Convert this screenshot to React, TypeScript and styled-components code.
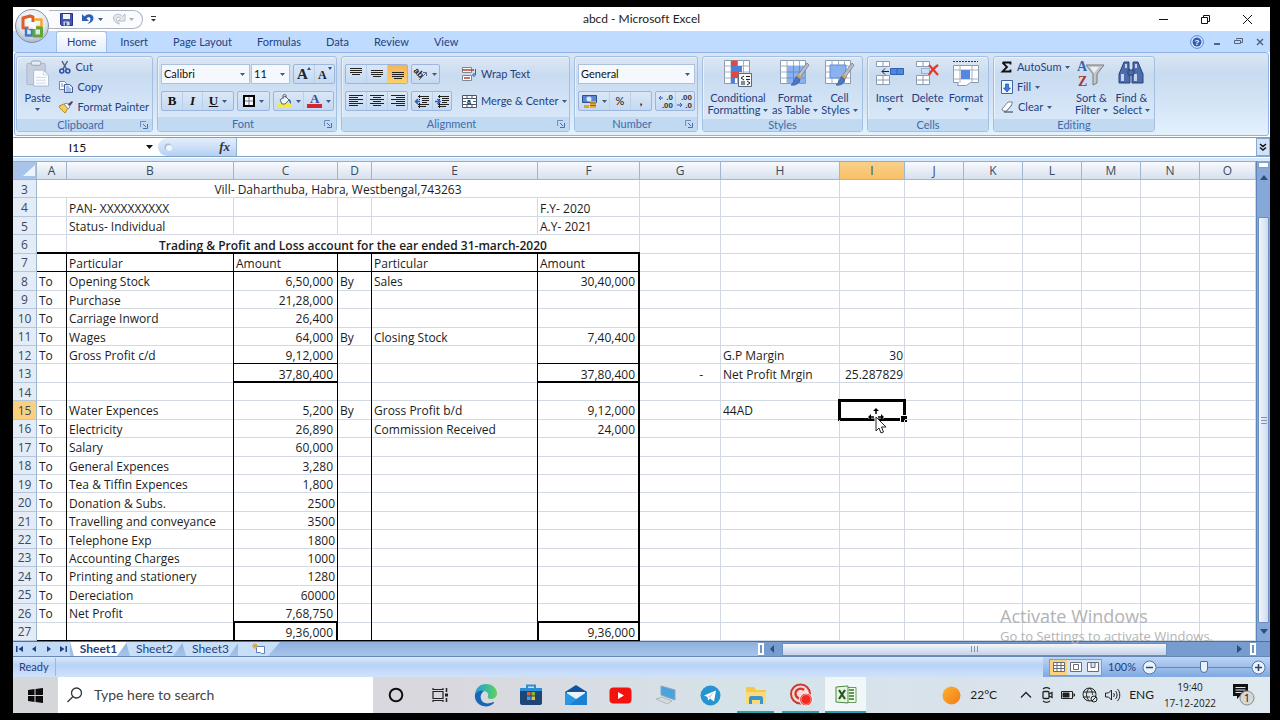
import React from "react";
import styled, { createGlobalStyle, css } from "styled-components";

const UI = `"Open Sans", "Noto Sans", sans-serif`;
const INK = "#1f4182";

const GlobalStyle = createGlobalStyle`
  * { box-sizing: border-box; }
  body { margin: 0; background: #000; }
  button, input, select { font: inherit; color: inherit; margin: 0; padding: 0; border: 0; background: none; border-radius: 0; outline: 0; }
  svg { display: block; flex: none; overflow: visible; }
`;

const Screen = styled.div`
  height: 100vh;
  padding: 7px 10px 7px 13px;
  background: #000;
  font: 11px/12px Lato, ${UI};
  color: ${INK};
  font-variant-ligatures: none;
`;

const Desktop = styled.div`
  height: 100%;
  display: flex;
  flex-direction: column;
  position: relative;
  overflow: hidden;
  background: #fff;
`;

/* ---------- title bar ---------- */

const TitleBar = styled.header`
  height: 24px;
  flex: none;
  display: grid;
  grid-template-columns: 1fr auto 1fr;
  align-items: center;
  color: #222;
  font-size: 12px;
`;

const QuickBar = styled.div`
  display: flex;
  align-items: center;
  padding-left: 36px;
`;

const QuickPill = styled.div`
  height: 19px;
  width: 94px;
  display: flex;
  align-items: center;
  gap: 5px;
  padding-left: 11px;
  border: 1px solid #aab4c4;
  border-left: 0;
  border-radius: 0 10px 10px 0;
  background: #fafbfd;
`;

const IconButton = styled.button<{ $w?: number }>`
  display: flex;
  align-items: center;
  justify-content: center;
  gap: 4px;
  width: ${(p) => (p.$w ? `${p.$w}px` : "auto")};
`;

const WindowButtons = styled.div`
  display: flex;
  justify-content: flex-end;
  padding-right: 2px;
`;

const OfficeButton = styled.button`
  position: absolute;
  z-index: 2;
  left: 1px;
  top: 1px;
`;

/* ---------- ribbon ---------- */

const TabBar = styled.nav`
  height: 21px;
  flex: none;
  display: flex;
  align-items: stretch;
  gap: 1px;
  padding-left: 43px;
  background: #bfdbff;
`;

const Tab = styled.button<{ $on?: boolean }>`
  padding: 0 12px;
  font-size: 11px;
  ${(p) =>
    p.$on &&
    css`
      padding: 0 10px;
      background: linear-gradient(#fff, #e3edf9);
      border: 1px solid #a0bee6;
      border-bottom: 0;
      border-radius: 3px 3px 0 0;
    `}
`;

const TabTools = styled.div`
  margin-left: auto;
  display: flex;
  align-items: center;
  gap: 9px;
  padding-right: 4px;
`;

const Ribbon = styled.section`
  height: 84px;
  flex: none;
  display: flex;
  gap: 4px;
  margin: 0 1px;
  padding: 3px 1px;
  border: 1px solid #8db2e3;
  border-radius: 3px;
  background: linear-gradient(#dbe6f4, #c9dbf0 25%, #d3e4f6 60%, #e4f2fd);
`;

const GroupBox = styled.section<{ $w: number }>`
  width: ${(p) => p.$w}px;
  flex: none;
  display: flex;
  flex-direction: column;
  border: 1px solid #a3c0e2;
  border-radius: 3px;
  box-shadow: inset 1px 1px #e9f1fa;
  background: linear-gradient(#dde7f4, #c9dbf0 25%, #d2e3f6 60%, #dcebfb);
`;

const GroupBody = styled.div`
  flex: 1;
  display: flex;
  padding: 0 3px;
`;

const GroupLabel = styled.div`
  height: 14px;
  display: flex;
  align-items: center;
  padding: 0 4px;
  background: #c1d9f1;
  color: #3e6aaa;
  > span { flex: 1; text-align: center; }
`;

const BigButton = styled.button<{ $w: number }>`
  width: ${(p) => p.$w}px;
  height: 62px;
  display: flex;
  flex-direction: column;
  align-items: center;
  padding-top: 3px;
  white-space: nowrap;
  > svg { margin-top: 4px; }
`;

const IconSlot = styled.span`
  height: 27px;
  margin-bottom: 5px;
`;

const BigLine = styled.span`
  display: flex;
  align-items: center;
  gap: 3px;
`;

const SmallStack = styled.div`
  display: flex;
  flex-direction: column;
  padding-left: 4px;
`;

const SmallButton = styled.button`
  height: 20px;
  display: flex;
  align-items: center;
  gap: 4px;
  white-space: nowrap;
`;

const Rows = styled.div`
  display: flex;
  flex-direction: column;
  gap: 7px;
  padding-top: 7px;
`;

const Row = styled.div<{ $gap?: number }>`
  display: flex;
  gap: ${(p) => p.$gap ?? 3}px;
  height: 20px;
`;

const Cluster = styled.div`
  display: flex;
  border: 1px solid #9ab6dc;
  border-radius: 2px;
  background: linear-gradient(#dbe7f6, #c5d9f1);
  > button + button { border-left: 1px solid #b9cfea; }
`;

const ToolButton = styled.button<{ $w: number; $on?: boolean }>`
  width: ${(p) => p.$w}px;
  display: flex;
  align-items: center;
  justify-content: center;
  gap: 4px;
  color: #111;
  background: ${(p) => (p.$on ? "linear-gradient(#f6b25c, #fcd06a)" : "none")};
`;

const Combo = styled.label<{ $w: number }>`
  width: ${(p) => p.$w}px;
  display: flex;
  align-items: center;
  padding: 0 4px 0 2px;
  border: 1px solid #abc1de;
  background: #f5f9fe;
  color: #111;
  select { flex: 1; min-width: 0; appearance: none; }
`;

const Divider = styled.div`
  width: 1px;
  margin: 6px 5px 6px 5px;
  background: #9dbbe0;
`;

/* ---------- formula bar ---------- */

const FormulaBar = styled.div`
  height: 20px;
  flex: none;
  display: flex;
  margin-top: 1px;
  border-top: 1px solid #7d9cbc;
  border-bottom: 1px solid #7fa3c4;
  background: #fff;
`;

const NameBox = styled.label`
  width: 145px;
  display: flex;
  align-items: center;
  color: #111;
  input { width: 129px; text-align: center; font-size: 12px; }
  svg { margin-left: 4px; }
`;

const FxButton = styled.button`
  width: 79px;
  display: flex;
  align-items: center;
  justify-content: space-between;
  padding: 0 6px;
  border-right: 1px solid #8fb0d8;
  border-radius: 9px 0 0 9px;
  background: linear-gradient(#e4effc, #b5d0f2);
  color: #333;
  font: italic bold 13px/14px "Liberation Serif", serif;
`;

const FormulaInput = styled.input`
  flex: 1;
  min-width: 0;
`;

const ExpandButton = styled.button`
  width: 14px;
  display: flex;
  align-items: center;
  justify-content: center;
  border: 1px solid #86a8d3;
  background: #cfe2f8;
`;

/* ---------- sheet ---------- */

const SheetArea = styled.main`
  flex: 1;
  min-height: 0;
  display: flex;
  margin-top: 4px;
  position: relative;
  box-shadow: 0 -3px #d6e8fa;
`;

const Table = styled.table`
  flex: 1;
  width: 100%;
  height: 100%;
  table-layout: fixed;
  border-collapse: separate;
  border-spacing: 0;
  color: #1c1c1c;
  font: 12px/14px ${UI};
  white-space: nowrap;
`;

const ColHead = styled.th<{ $on?: boolean }>`
  height: 19px;
  padding: 0;
  font-weight: 400;
  color: #3a4a5e;
  border-right: 1px solid #9eb6ce;
  border-bottom: 1px solid #9eb6ce;
  border-top: 1px solid #8fb0cc;
  background: ${(p) => (p.$on ? "linear-gradient(#f9d08c, #f8c065)" : "linear-gradient(#f8fafd, #d6e0ee)")};
`;

const Corner = styled.th`
  padding: 0;
  border-right: 1px solid #9eb6ce;
  border-bottom: 1px solid #9eb6ce;
  border-top: 1px solid #8fb0cc;
  background: #a9c4e9;
  svg { margin-left: 10px; }
`;

const RowHead = styled.th<{ $on?: boolean }>`
  padding: 2px 0 0;
  font-weight: 400;
  color: #3a4a5e;
  border-right: 1px solid #9eb6ce;
  border-bottom: 1px solid #b4c6dc;
  background: ${(p) => (p.$on ? "#fbcf7c" : "#e4ecf7")};
`;

type Line = 0 | 1 | 2;
const RULE = "#000";
const FAINT = "#d3d9e2";

/* Ruled edges are listed before the faint gridlines so they paint over them. */
const edges = (r: Line = 0, b: Line = 0, l: Line = 0) => {
  const ruled = [r && `inset -${r}px 0 ${RULE}`, b && `inset 0 -${b}px ${RULE}`, l && `inset ${l}px 0 ${RULE}`];
  const faint = [!r && `inset -1px 0 ${FAINT}`, !b && `inset 0 -1px ${FAINT}`];
  return [...ruled, ...faint].filter(Boolean).join(", ");
};

const Cell = styled.td<{ $r?: Line; $b?: Line; $l?: Line; $align?: string; $end?: number; $bold?: boolean }>`
  position: relative;
  height: 18px;
  padding: 2px ${(p) => p.$end ?? 3}px 0 2px;
  text-align: ${(p) => p.$align ?? "left"};
  font-weight: ${(p) => (p.$bold ? 600 : 400)};
  box-shadow: ${(p) => edges(p.$r, p.$b, p.$l)};
`;

const Selection = styled.div`
  position: absolute;
  inset: -2px -1px -1px -2px;
  border: 3px solid #000;
  &::after {
    content: "";
    position: absolute;
    right: -4px;
    bottom: -4px;
    width: 6px;
    height: 6px;
    background: #000;
    border: solid #fff;
    border-width: 1px 0 0 1px;
  }
`;

const Pointer = styled.svg`
  position: absolute;
  z-index: 1;
  left: 28px;
  top: 7px;
`;

const Watermark = styled.div`
  position: absolute;
  right: 52px;
  bottom: -4px;
  width: 218px;
  color: #b3b3b3;
  font-family: ${UI};
  white-space: nowrap;
`;
const MarkTitle = styled.div`
  font-size: 18px;
  line-height: 22px;
`;
const MarkText = styled.div`
  font-size: 13px;
  line-height: 18px;
`;

const VScroll = styled.div`
  width: 14px;
  flex: none;
  display: flex;
  flex-direction: column;
  align-items: center;
  border-left: 1px solid #5f86bb;
  background: #86a8d8;
`;
const SplitHandle = styled.div`
  width: 11px;
  height: 6px;
  margin: 1px 0 7px;
  border: 1px solid #7f9fc9;
  background: #fff;
`;
const VThumb = styled.div`
  flex: 1;
  width: 11px;
  margin: 37px 0 6px;
  border: 1px solid #6c8fc0;
  border-radius: 1px;
  background: linear-gradient(90deg, #f2f6fc, #cddcf0);
  display: flex;
  align-items: center;
  justify-content: center;
`;

/* ---------- sheet tabs, status ---------- */

const BottomBar = styled.div`
  height: 16px;
  flex: none;
  display: flex;
  border-top: 1px solid #4f6f9f;
  border-bottom: 1px solid #6787b7;
  background: linear-gradient(#8fb1dd, #a6c4ea);
`;
const SheetNav = styled.div`
  width: 57px;
  display: flex;
  align-items: center;
  justify-content: space-around;
  background: #c4dbf7;
`;
const SheetTab = styled.button<{ $on?: boolean }>`
  width: 57px;
  font-size: 12px;
  font-weight: ${(p) => (p.$on ? 700 : 400)};
  background: ${(p) => (p.$on ? "#fff" : "#c9def7")};
  clip-path: polygon(0 0, 100% 0, calc(100% - 10px) 100%, 4px 100%);
  margin-right: -1px;
`;
const NewTab = styled.button`
  width: 42px;
  display: flex;
  align-items: center;
  justify-content: center;
  background: #c9def7;
  clip-path: polygon(0 0, 100% 0, calc(100% - 12px) 100%, 0 100%);
`;
const HScroll = styled.div`
  width: 512px;
  margin-left: auto;
  display: flex;
  align-items: center;
  background: #779dd0;
`;
const Grip = styled.div`
  width: 6px;
  height: 12px;
  border: 2px solid #fff;
  background: #6e93c4;
`;
const HThumb = styled.div`
  flex: 1;
  height: 13px;
  margin: 0 69px 0 6px;
  display: flex;
  align-items: center;
  justify-content: center;
  border: 1px solid #6c8fc0;
  background: linear-gradient(#f4f7fc, #c4d2e8);
`;
const StatusBar = styled.footer`
  height: 20px;
  flex: none;
  display: flex;
  align-items: center;
  background: linear-gradient(#dbe9fb, #b9d3f6 40%, #cfe2fb);
`;
const Ready = styled.div`
  width: 43px;
  padding-left: 6px;
  line-height: 18px;
  border-right: 1px solid #98b8e3;
`;
const StatusTools = styled.div`
  margin-left: auto;
  width: 227px;
  height: 20px;
  display: flex;
  align-items: center;
  padding: 0 4px 0 6px;
  background: linear-gradient(#bcd5f6, #7fa9e0);
`;
const ViewButtons = styled.div`
  display: flex;
  border: 1px solid #7b9ccc;
  background: #d5e4f6;
`;
const ViewButton = styled.button<{ $on?: boolean }>`
  width: 17px;
  height: 15px;
  display: flex;
  align-items: center;
  justify-content: center;
  background: ${(p) => (p.$on ? "#fbd27d" : "none")};
`;
const ZoomText = styled.span`
  width: 40px;
  text-align: center;
`;
const ZoomRange = styled.input`
  flex: 1;
  min-width: 0;
  height: 14px;
  appearance: none;
  background: linear-gradient(#5f86bd, #5f86bd) center / 100% 1px no-repeat;
  &::-webkit-slider-thumb {
    appearance: none;
    width: 8px;
    height: 12px;
    border: 1px solid #4c6f9f;
    border-radius: 1px 1px 4px 4px;
    background: #e8f1fc;
  }
`;

/* ---------- taskbar ---------- */

const Taskbar = styled.footer`
  height: 36px;
  flex: none;
  display: flex;
  align-items: stretch;
  background: linear-gradient(90deg, #d5d6da, #d9d8de 35%, #d5e4ea 60%, #d9e2ea 75%, #dfe9f0);
  color: #1d1d1d;
`;
const StartButton = styled.button`
  width: 45px;
  display: flex;
  align-items: center;
  justify-content: center;
`;
const Search = styled.label`
  width: 315px;
  display: flex;
  align-items: center;
  gap: 11px;
  padding-left: 9px;
  background: #fff;
  input { flex: 1; min-width: 0; font-size: 14px; line-height: 18px; }
  input::placeholder { color: #444; opacity: 1; }
`;
const TaskButton = styled.button<{ $open?: boolean; $on?: boolean }>`
  width: 45px;
  display: flex;
  align-items: center;
  justify-content: center;
  border: solid transparent;
  border-width: 0 ${(p) => (p.$on ? 2 : 4)}px;
  background: ${(p) => (p.$on ? "#f1f6f8" : "none")};
  background-clip: padding-box;
  box-shadow: ${(p) => (p.$open ? "inset 0 -2px #2aa3ad" : "none")};
`;
const Tray = styled.div`
  margin-left: auto;
  display: flex;
  align-items: center;
  font-size: 12px;
  padding-right: 14px;
`;
const Weather = styled.button`
  display: flex;
  align-items: center;
  gap: 9px;
  margin-right: 22px;
`;
const TrayIcons = styled.div`
  display: flex;
  align-items: center;
  gap: 7px;
  margin-right: 8px;
`;
const Clock = styled.time`
  width: 72px;
  margin-right: 6px;
  font: 10px/16px ${UI};
  text-align: center;
`;

/* ---------- icons ---------- */

const Caret = ({ c = "#3c5a8c", s = 5 }: { c?: string; s?: number }) => (
  <svg width={s} height={s === 7 ? 4 : 3} viewBox="0 0 6 3" preserveAspectRatio="none"><path d="M0 0h6L3 3z" fill={c} /></svg>
);
const Launcher = () => (
  <svg width="8" height="8" viewBox="0 0 8 8" fill="none" stroke="#6b8fc0"><path d="M.5 6V.5H6" /><path d="M3 3l3 3" stroke="#4a70a8" /><path d="M7.500 3v4.500H3" stroke="#4a70a8" /></svg>
);
const OfficeLogo = () => (
  <svg width="36" height="36" viewBox="0 0 36 36">
    <defs>
      <radialGradient id="orb" cx=".5" cy=".3" r=".75"><stop offset="0" stopColor="#fff" /><stop offset=".6" stopColor="#dfe4ee" /><stop offset="1" stopColor="#a3acbd" /></radialGradient>
    </defs>
    <circle cx="18" cy="18" r="16.500" fill="url(#orb)" stroke="#8791a3" />
    <g fill="none" strokeLinejoin="round">
      <path d="M15 20H9V10l7-2 3 1v5" stroke="#dd5f2a" strokeWidth="3" />
      <path d="M20 11.500h7.500V19H22" stroke="#f2a929" strokeWidth="2.500" />
      <path d="M12 20v7.500h6V21h-3" stroke="#3d78c9" strokeWidth="2.500" />
      <path d="M20 21v7h7.500v-8H22" stroke="#5fa636" strokeWidth="3" />
    </g>
    <path d="M14.500 14h7v7h-7z" fill="#fff" opacity=".75" />
  </svg>
);
const SaveIcon = () => (
  <svg width="13" height="13" viewBox="0 0 13 13"><path d="M.5.5h12v12h-11l-1-1z" fill="#4256b0" stroke="#27347c" /><path d="M3 1h7v5H3z" fill="#eef3fb" /><path d="M3.500 8.500h6v4h-6z" fill="#cdd6ea" /><path d="M5 9.500h1.500v3H5z" fill="#27347c" /></svg>
);
const UndoIcon = () => (
  <svg width="12" height="12" viewBox="0 0 12 12"><path d="M0 1v7h7L4.500 5.500C6 3.500 8.500 3.800 8.500 6c0 2-1.500 3.500-3 5C9 10 11.500 8 11.500 5 11.500 1 5.500-.5 2.500 3.500z" fill="#2f5db8" /></svg>
);
const RedoIcon = () => (
  <svg width="12" height="12" viewBox="0 0 12 12"><path d="M12 1v7H5l2.500-2.500C6 3.500 3.500 3.800 3.500 6c0 2 1.500 3.500 3 5C3 10 .5 8 .5 5 .5 1 6.500-.5 9.500 3.500z" fill="#e4e8ef" stroke="#aab1bf" strokeWidth=".8" /></svg>
);
const CutIcon = () => (
  <svg width="12" height="13" viewBox="0 0 12 13" fill="none"><path d="M3 0l4.500 8M8.500 0L4 8" stroke="#4c5f85" strokeWidth="1.500" /><circle cx="2.800" cy="10" r="2" stroke="#2b52a8" strokeWidth="1.600" /><circle cx="8.800" cy="10" r="2" stroke="#2b52a8" strokeWidth="1.600" /></svg>
);
const CopyIcon = () => (
  <svg width="14" height="12" viewBox="0 0 14 12"><path d="M.5.5h5l2 2v6h-7z" fill="#fff" stroke="#6c87b8" /><path d="M5.500 3.500h5l3 2.500v5.500h-8z" fill="#e3ecfa" stroke="#3e5c98" /><path d="M7 6h3M7 8h5M7 10h5M2 3h2M2 5h3" stroke="#6f8fc8" /></svg>
);
const PainterIcon = () => (
  <svg width="14" height="13" viewBox="0 0 14 13"><path d="M0 5l5-2 4 4-3 5C4 10 1 8 0 5z" fill="#f2cf61" stroke="#b48a2c" /><path d="M5 3l3-1 3 4-2 2z" fill="#f5f5f5" stroke="#777" strokeWidth=".8" /><path d="M9 3l4-3 1 1-3 4z" fill="#4a3f6b" /></svg>
);
const PasteIcon = () => (
  <svg width="26" height="27" viewBox="0 0 26 28"><rect x="1.500" y="3.500" width="19" height="22" rx="1" fill="#c6cfde" stroke="#aab4c6" /><rect x="6" y="1" width="10" height="4.500" rx="2" fill="#e7ebf2" stroke="#959fb2" /><path d="M8.500 10.500h10l5.500 5v11.500H8.500z" fill="#fbfcff" stroke="#aeb8cb" /><path d="M18.500 10.500v5H24M11 18h10M11 21h10M11 24h10" fill="none" stroke="#ccd5e4" /></svg>
);
const LetterA = ({ size, up }: { size: number; up?: boolean }) => (
  <svg width="16" height="16" viewBox="0 0 16 16"><text x="1" y="13" fontFamily="Liberation Serif" fontWeight="700" fontSize={size} fill="#1c2434">A</text><path d={up ? "M11 4l2-3 2 3z" : "M11 1h4l-2 3z"} fill="#24509c" /></svg>
);
const FormatGlyph = styled.span<{ $kind: "b" | "i" | "u" }>`
  font: ${(p) => (p.$kind === "i" ? "italic " : "")}bold 13px/14px "Liberation Serif", serif;
  text-decoration: ${(p) => (p.$kind === "u" ? "underline" : "none")};
`;
const BorderIcon = () => (
  <svg width="12" height="12" viewBox="0 0 12 12" fill="none"><path d="M1 1h10v10H1z" fill="#f4f7fb" stroke="#000" strokeWidth="2" /><path d="M6 2v8M2 6h8" stroke="#778" /></svg>
);
const BucketIcon = () => (
  <svg width="15" height="14" viewBox="0 0 15 14"><path d="M0 10h14v4H0z" fill="#f3ea3a" /><path d="M3 6l5-4 4 4-4 4H5z" fill="#f4f6fa" stroke="#5a6478" /><path d="M6 5V1.500c0-1.500 3-1.500 3 0V4" fill="none" stroke="#5a6478" /><path d="M12 5c2 1 2.500 3 1.500 5-1-1-1.500-3-1.500-5z" fill="#2f5db8" /></svg>
);
const FontColorIcon = () => (
  <svg width="15" height="14" viewBox="0 0 15 14"><path d="M0 10h15v4H0z" fill="#d9252a" /><text x="3" y="9" fontFamily="Liberation Serif" fontWeight="700" fontSize="13" fill="#2c4f96">A</text></svg>
);
const Lines = ({ rows, off = 0 }: { rows: [number, number][]; off?: number }) => (
  <svg width="14" height="14" viewBox="0 0 14 14" stroke="#222" strokeWidth="1">
    {rows.map(([x, w], i) => <path key={i} d={`M${x} ${off + 1.5 + i * 2}h${w}`} />)}
  </svg>
);
const full: [number, number][] = [[1, 12], [1, 12], [1, 12], [3, 8]];
const alignL: [number, number][] = [[0, 14], [0, 9], [0, 14], [0, 9], [0, 14], [0, 9]];
const alignC: [number, number][] = [[0, 14], [3, 8], [0, 14], [3, 8], [0, 14], [3, 8]];
const alignR: [number, number][] = [[0, 14], [5, 9], [0, 14], [5, 9], [0, 14], [5, 9]];
const OrientIcon = () => (
  <svg width="14" height="13" viewBox="0 0 14 13"><text transform="rotate(45 4 4)" x="0" y="7" fontFamily="Liberation Sans" fontSize="9" fontWeight="700" fill="#222">ab</text><path d="M5 12l7-7M9 4.500h3.500V8" fill="none" stroke="#5c6d8c" /></svg>
);
const IndentIcon = ({ flip }: { flip?: boolean }) => (
  <svg width="14" height="13" viewBox="0 0 14 13" fill="none"><path d="M3 1.500h11M7 3.500h7M7 5.500h7M7 7.500h5M3 9.500h11M3 11.500h8" stroke="#222" /><path d="M4.500 0v13" stroke="#222" strokeDasharray="1 1" /><path d={flip ? "M0 6.500h4M2.500 4l2.500 2.500L2.500 9" : "M5 6.500H1M3 4L.5 6.500 3 9"} stroke="#2f5db8" strokeWidth="1.500" /></svg>
);
const WrapIcon = () => (
  <svg width="15" height="14" viewBox="0 0 15 14" fill="none"><path d="M.5.5h9v5h-9zM.5 8.500h9v5h-9z" fill="#fff" stroke="#7d8798" /><path d="M0 3h12M2 11h6" stroke="#b5452c" strokeWidth="1.500" /><path d="M13.500 2v6H11M12.500 6l-2 2 2 2" stroke="#2f5db8" /></svg>
);
const MergeIcon = () => (
  <svg width="15" height="13" viewBox="0 0 15 13"><path d="M.5.5h14v12H.5zM.5 3.500h14M.5 9.500h14M5 .5v3M10 .5v3M5 9.500v3M10 9.500v3" fill="#fff" stroke="#4b5668" /><path d="M1 6.500h3M14 6.500h-3" stroke="#2f5db8" /><text x="5" y="9" fontSize="7" fontWeight="700" fontFamily="Liberation Sans" fill="#111">a</text></svg>
);
const MoneyIcon = () => (
  <svg width="16" height="15" viewBox="0 0 16 15"><path d="M.5 1.500h14v7H.5z" fill="#5a86cf" stroke="#2d4f94" /><circle cx="7" cy="5" r="2.500" fill="#dbe7fa" /><path d="M8 7h6v7H8z" fill="#e5ad3c" /><path d="M8 9h6M8 11.500h6" stroke="#8e6414" /><path d="M2 11h5v3H2z" fill="#dca233" /></svg>
);
const DecimalIcon = ({ a, b, right }: { a: string; b: string; right?: boolean }) => (
  <svg width="16" height="15" viewBox="0 0 16 15" fontFamily="Liberation Sans" fontWeight="700" fontSize="8" fill="#333"><text x="15" y="6" textAnchor="end">{a}</text><text x="15" y="14" textAnchor="end">{b}</text><path d={right ? "M0 11h4M3 9l2 2-2 2" : "M5 4H1M3 2L1 4l2 2"} fill="none" stroke="#2f5db8" /></svg>
);
const CellsBase = () => (
  <><path d="M.5.5h25v23H.5z" fill="#fff" stroke="#8c9ab0" /><path d="M.5 6h25M.5 12h25M.5 18h25M7 .5v23M13.500 .5v23M19.500 .5v23" stroke="#a4b0c4" /></>
);
const Brush = () => (
  <><path d="M27 3l2 2-9 13-3-2z" fill="#b9bfca" stroke="#6c7484" strokeWidth=".7" /><path d="M17 16l3 2c0 5-4 8-9 7 3-2 3-6 6-9z" fill="#4a78c0" stroke="#345a98" strokeWidth=".7" /><path d="M18 14l4 3-2 2-3.500-3z" fill="#d9a04a" /></>
);
const ConditionalIcon = () => (
  <svg width="28" height="27" viewBox="0 0 28 27"><CellsBase /><path d="M7 .5h6.500V6H7zM7 12h8v6H7z" fill="#dd4a44" /><path d="M7 6h11v6H7zM7 18h4v5.500H7z" fill="#4f7fd6" /><path d="M14.500 13.500h13v13h-13z" fill="#f2f5fa" stroke="#5c6b84" /><path d="M20 16l-3 2 3 2M22 16.500h4M22 19.500h4M17 22h4M17 24h4M23 21l3 2-3 2" stroke="#222" fill="none" /></svg>
);
const TableIcon = () => (
  <svg width="30" height="27" viewBox="0 0 30 27"><CellsBase /><path d="M7 6h18v17H7z" fill="#8ab2ee" /><path d="M7 12h18M7 18h18M13.500 6v17M19.500 6v17" stroke="#5e8cd6" /><Brush /></svg>
);
const StyleIcon = () => (
  <svg width="30" height="27" viewBox="0 0 30 27"><CellsBase /><path d="M5 5h16v13H5z" fill="#8ab2ee" stroke="#5e8cd6" /><Brush /></svg>
);
const InsertIcon = () => (
  <svg width="28" height="27" viewBox="0 0 28 27"><path d="M.5 1.500h13v5H.5zM7 1.500v5M.5 15.500h13v9H.5zM7 15.500v9M.5 20h13" fill="#fff" stroke="#8c9ab0" /><path d="M14.500 8.500h13v6h-13zM21 8.500v6" fill="#4f87e0" stroke="#3160b0" /><path d="M13 11.500H6M9 8.500l-3 3 3 3" fill="none" stroke="#222" /></svg>
);
const DeleteIcon = () => (
  <svg width="24" height="27" viewBox="0 0 24 27"><path d="M.5 1.500h13v5H.5zM7 1.500v5M.5 15.500h13v9H.5zM7 15.500v9M.5 20h13" fill="#fff" stroke="#8c9ab0" /><path d="M5.500 8.500h8v5h-8z" fill="none" stroke="#4f7fd6" strokeDasharray="1 1" /><path d="M13 5l9 10M22 5c-4 3-7 6-9 10" stroke="#e03a2a" strokeWidth="2.200" /></svg>
);
const FormatIcon = () => (
  <svg width="28" height="27" viewBox="0 0 28 27"><path d="M1 1.500h25" stroke="#333" strokeDasharray="2 1" /><path d="M1.500 5.500h25v17h-8l-4 3h-9l1-3h-5z" fill="#fff" stroke="#8c9ab0" /><path d="M8 5.500v17M20 5.500v17M1.500 10h25M1.500 19h25" stroke="#a4b0c4" /><path d="M9 10h9v9H9z" fill="#5288e0" /></svg>
);
const SigmaIcon = () => (
  <svg width="12" height="12" viewBox="0 0 12 12"><path d="M1.500 1.500h8v2M1.500 1.500L6 6l-4.500 4.500h8v-2" fill="none" stroke="#111" strokeWidth="1.800" /></svg>
);
const FillIcon = () => (
  <svg width="12" height="14" viewBox="0 0 12 14"><path d="M.5.5h11v13H.5z" fill="#eef4fd" stroke="#3f64a6" /><path d="M4.500 4h3v4h2L6 12 2.500 8h2z" fill="#3f7ce0" stroke="#24509c" strokeWidth=".7" /></svg>
);
const EraserIcon = () => (
  <svg width="13" height="12" viewBox="0 0 13 12"><path d="M1 8l6-7h4.500l-1 3-5 6H2z" fill="#fff" stroke="#7a8496" /><path d="M3 11h9" stroke="#333" /><path d="M5.500 10l5.500-6" stroke="#7a8496" /></svg>
);
const SortIcon = () => (
  <svg width="28" height="27" viewBox="0 0 28 27" fontFamily="Liberation Serif" fontWeight="700"><path d="M9 5h18l-7 9v9l-4 2V14z" fill="#c4c6ca" stroke="#777b84" /><path d="M13 7h9l-5 6z" fill="#eee" /><text x="0" y="11" fontSize="14" fill="#3563b5">A</text><text x="1" y="26" fontSize="14" fill="#a33b33">Z</text></svg>
);
const FindIcon = () => (
  <svg width="26" height="25" viewBox="0 0 26 25"><g fill="#4d6ca8" stroke="#26427c"><path d="M6 2h5v6l1 4v11H1V14l3-7z" /><path d="M15 2h5l2 5 3 7v9H14V12l1-4z" /><path d="M10 10h6v5h-6z" /></g><path d="M3 14h3v7H3zM16 14h3v7h-3zM7 4h2v4H7zM17 4h2v4h-2z" fill="#c4d4f0" /></svg>
);
const HelpIcon = () => (
  <svg width="14" height="14" viewBox="0 0 14 14"><circle cx="7" cy="7" r="6.300" fill="#e9f1fc" stroke="#4f7fc4" /><circle cx="7" cy="7" r="4.500" fill="#2a5fc0" /><text x="7" y="10" fontSize="8" fontWeight="700" textAnchor="middle" fill="#fff" fontFamily="Liberation Sans">?</text></svg>
);
const StatusGlyph = ({ d }: { d: string }) => (
  <svg width="12" height="11" viewBox="0 0 12 11"><path d={d} fill="#fff" stroke="#666c78" /></svg>
);
const ZoomKnob = ({ plus }: { plus?: boolean }) => (
  <svg width="15" height="15" viewBox="0 0 15 15"><circle cx="7.500" cy="7.500" r="6.500" fill="#e9f2fd" stroke="#56759f" /><path d={plus ? "M4 7.500h7M7.500 4v7" : "M4 7.500h7"} stroke="#2c4468" strokeWidth="1.500" /></svg>
);

/* ---------- content ---------- */

const columns = [24, 30, 167, 104, 34, 166, 102, 81, 119, 65, 59, 59, 59, 59, 59];
const letters = "ABCDEFGHIJKLMNO".split("");

type Entry = { to?: boolean; left?: string; amt?: string; by?: boolean; right?: string; ramt?: string; h?: string; i?: string; g?: string };
const entries: Record<number, Entry> = {
  8: { to: true, left: "Opening Stock", amt: "6,50,000", by: true, right: "Sales", ramt: "30,40,000" },
  9: { to: true, left: "Purchase", amt: "21,28,000" },
  10: { to: true, left: "Carriage Inword", amt: "26,400" },
  11: { to: true, left: "Wages", amt: "64,000", by: true, right: "Closing Stock", ramt: "7,40,400" },
  12: { to: true, left: "Gross Profit c/d", amt: "9,12,000", h: "G.P Margin", i: "30" },
  13: { amt: "37,80,400", ramt: "37,80,400", g: "-", h: "Net Profit Mrgin", i: "25.287829" },
  14: {},
  15: { to: true, left: "Water Expences", amt: "5,200", by: true, right: "Gross Profit b/d", ramt: "9,12,000", h: "44AD" },
  16: { to: true, left: "Electricity", amt: "26,890", right: "Commission Received", ramt: "24,000" },
  17: { to: true, left: "Salary", amt: "60,000" },
  18: { to: true, left: "General Expences", amt: "3,280" },
  19: { to: true, left: "Tea & Tiffin Expences", amt: "1,800" },
  20: { to: true, left: "Donation & Subs.", amt: "2500" },
  21: { to: true, left: "Travelling and conveyance", amt: "3500" },
  22: { to: true, left: "Telephone Exp", amt: "1800" },
  23: { to: true, left: "Accounting Charges", amt: "1000" },
  24: { to: true, left: "Printing and stationery", amt: "1280" },
  25: { to: true, left: "Dereciation", amt: "60000" },
  26: { to: true, left: "Net Profit", amt: "7,68,750" },
  27: { amt: "9,36,000", ramt: "9,36,000" },
};

const Blank = ({ n }: { n: number }) => <>{Array.from({ length: n }, (_, i) => <Cell key={i} />)}</>;

const LedgerRow = ({ n, e }: { n: number; e: Entry }) => {
  const last: Line = n === 27 ? 1 : 0;
  const sum: Line = n === 12 ? 1 : n === 13 || n === 26 ? 2 : last;
  return (
    <tr>
      <RowHead $on={n === 15}>{n}</RowHead>
      <Cell $r={1} $b={last}>{e.to ? "To" : ""}</Cell>
      <Cell $r={1} $b={last}>{e.left}</Cell>
      <Cell $r={n === 27 ? 2 : 1} $l={last} $b={sum} $align="right" $end={e.amt && !e.amt.includes(",") ? 3 : 5}>{e.amt}</Cell>
      <Cell $r={1} $b={last}>{e.by ? "By" : ""}</Cell>
      <Cell $r={1} $b={last}>{e.right}</Cell>
      <Cell $r={2} $l={last} $b={sum} $align="right" $end={5}>{e.ramt}</Cell>
      <Cell $align="right" $end={18}>{e.g}</Cell>
      <Cell>{e.h}</Cell>
      <Cell $align="right" $end={2}>
        {e.i}
        {n === 15 && (
          <>
            <Selection />
            <Pointer width="18" height="26" viewBox="0 0 18 26">
              <path d="M8 1v14M0 9h16" stroke="#fff" strokeWidth="3" />
              <path d="M8 2v4M2 9h4M10 9h5" stroke="#000" strokeWidth="1.500" />
              <path d="M8 0l3 3H5zM0 9l3-3v6zM16 9l-3-3v6z" fill="#000" />
              <path d="M8 9v14l3-3 2 5 2.500-1-2-5H18z" fill="#fff" stroke="#222" />
            </Pointer>
          </>
        )}
      </Cell>
      <Blank n={6} />
    </tr>
  );
};

const Sheet = () => (
  <Table>
    <colgroup>
      {columns.map((w, i) => <col key={i} width={w} />)}
      <col />
    </colgroup>
    <thead>
      <tr>
        <Corner><svg width="12" height="11"><path d="M12 0v11H0z" fill="#eef4fc" /></svg></Corner>
        {letters.map((l) => <ColHead key={l} $on={l === "I"}>{l}</ColHead>)}
      </tr>
    </thead>
    <tbody>
      <tr><RowHead>3</RowHead><Cell colSpan={6} $align="center">Vill- Daharthuba, Habra, Westbengal,743263</Cell><Blank n={9} /></tr>
      <tr><RowHead>4</RowHead><Cell /><Cell>PAN- XXXXXXXXXX</Cell><Blank n={3} /><Cell>F.Y- 2020</Cell><Blank n={9} /></tr>
      <tr><RowHead>5</RowHead><Cell /><Cell>Status- Individual</Cell><Blank n={3} /><Cell>A.Y- 2021</Cell><Blank n={9} /></tr>
      <tr><RowHead>6</RowHead><Cell $b={2} /><Cell colSpan={5} $align="center" $bold $b={2}>Trading &amp; Profit and Loss account for the ear ended 31-march-2020</Cell><Blank n={9} /></tr>
      <tr>
        <RowHead>7</RowHead><Cell $r={1} $b={1} /><Cell $r={1} $b={1}>Particular</Cell><Cell $r={1} $b={1}>Amount</Cell><Cell $r={1} $b={1} />
        <Cell $r={1} $b={1}>Particular</Cell><Cell $r={2} $b={1}>Amount</Cell><Blank n={9} />
      </tr>
      {Object.entries(entries).map(([n, e]) => <LedgerRow key={n} n={Number(n)} e={e} />)}
    </tbody>
  </Table>
);

const Group = ({ title, w, launch, children }: { title: string; w: number; launch?: boolean; children: React.ReactNode }) => (
  <GroupBox $w={w} aria-label={title}>
    <GroupBody>{children}</GroupBody>
    <GroupLabel><span>{title}</span>{launch && <Launcher />}</GroupLabel>
  </GroupBox>
);

const Big = ({ w, icon, lines }: { w: number; icon: React.ReactNode; lines: string[] }) => (
  <BigButton $w={w}>
    <IconSlot>{icon}</IconSlot>
    {lines.map((t, i) => <BigLine key={t}>{t}{i === 1 && <Caret />}</BigLine>)}
    {lines.length === 1 && <Caret />}
  </BigButton>
);

const RibbonPanel = () => (
  <Ribbon>
    <Group title="Clipboard" w={137} launch>
      <Big w={38} icon={<PasteIcon />} lines={["Paste"]} />
      <SmallStack>
        <SmallButton><CutIcon />Cut</SmallButton>
        <SmallButton><CopyIcon />Copy</SmallButton>
        <SmallButton><PainterIcon />Format Painter</SmallButton>
      </SmallStack>
    </Group>
    <Group title="Font" w={180} launch>
      <Rows>
        <Row>
          <Row $gap={1}>
            <Combo $w={89}><select aria-label="Font name"><option>Calibri</option></select><Caret /></Combo>
            <Combo $w={39}><select aria-label="Font size"><option>11</option></select><Caret /></Combo>
          </Row>
          <Cluster>
            <ToolButton $w={20} aria-label="Grow font"><LetterA size={15} up /></ToolButton>
            <ToolButton $w={20} aria-label="Shrink font"><LetterA size={12} /></ToolButton>
          </Cluster>
        </Row>
        <Row>
          <Cluster>
            <ToolButton $w={20}><FormatGlyph $kind="b">B</FormatGlyph></ToolButton>
            <ToolButton $w={20}><FormatGlyph $kind="i">I</FormatGlyph></ToolButton>
            <ToolButton $w={31}><FormatGlyph $kind="u">U</FormatGlyph><Caret /></ToolButton>
          </Cluster>
          <Cluster><ToolButton $w={31} aria-label="Borders"><BorderIcon /><Caret /></ToolButton></Cluster>
          <Cluster>
            <ToolButton $w={29} aria-label="Fill colour"><BucketIcon /><Caret /></ToolButton>
            <ToolButton $w={30} aria-label="Font colour"><FontColorIcon /><Caret /></ToolButton>
          </Cluster>
        </Row>
      </Rows>
    </Group>
    <Group title="Alignment" w={229} launch>
      <Rows>
        <Row>
          <Cluster>
            <ToolButton $w={20} aria-label="Top"><Lines rows={full} /></ToolButton>
            <ToolButton $w={21} aria-label="Middle"><Lines rows={full} off={2} /></ToolButton>
            <ToolButton $w={20} aria-label="Bottom" $on><Lines rows={full} off={4} /></ToolButton>
          </Cluster>
          <Cluster><ToolButton $w={27} aria-label="Orientation"><OrientIcon /><Caret /></ToolButton></Cluster>
        </Row>
        <Row>
          <Cluster>
            <ToolButton $w={20} aria-label="Left"><Lines rows={alignL} /></ToolButton>
            <ToolButton $w={21} aria-label="Centre"><Lines rows={alignC} /></ToolButton>
            <ToolButton $w={20} aria-label="Right"><Lines rows={alignR} /></ToolButton>
          </Cluster>
          <Cluster>
            <ToolButton $w={20} aria-label="Decrease indent"><IndentIcon /></ToolButton>
            <ToolButton $w={19} aria-label="Increase indent"><IndentIcon flip /></ToolButton>
          </Cluster>
        </Row>
      </Rows>
      <Divider />
      <Rows>
        <SmallButton><WrapIcon />Wrap Text</SmallButton>
        <SmallButton><MergeIcon />Merge &amp; Center<Caret /></SmallButton>
      </Rows>
    </Group>
    <Group title="Number" w={124} launch>
      <Rows>
        <Row><Combo $w={117}><select aria-label="Number format"><option>General</option></select><Caret /></Combo></Row>
        <Row>
          <Cluster>
            <ToolButton $w={30} aria-label="Currency"><MoneyIcon /><Caret /></ToolButton>
            <ToolButton $w={21}>%</ToolButton>
            <ToolButton $w={21}><b>,</b></ToolButton>
          </Cluster>
          <Cluster>
            <ToolButton $w={19} aria-label="Increase decimal"><DecimalIcon a=".0" b=".00" /></ToolButton>
            <ToolButton $w={19} aria-label="Decrease decimal"><DecimalIcon a=".00" b=".0" right /></ToolButton>
          </Cluster>
        </Row>
      </Rows>
    </Group>
    <Group title="Styles" w={161}>
      <Big w={64} icon={<ConditionalIcon />} lines={["Conditional", "Formatting"]} />
      <Big w={50} icon={<TableIcon />} lines={["Format", "as Table"]} />
      <Big w={39} icon={<StyleIcon />} lines={["Cell", "Styles"]} />
    </Group>
    <Group title="Cells" w={122}>
      <Big w={37} icon={<InsertIcon />} lines={["Insert"]} />
      <Big w={39} icon={<DeleteIcon />} lines={["Delete"]} />
      <Big w={38} icon={<FormatIcon />} lines={["Format"]} />
    </Group>
    <Group title="Editing" w={162}>
      <SmallStack>
        <SmallButton><SigmaIcon />AutoSum<Caret /></SmallButton>
        <SmallButton><FillIcon />Fill<Caret /></SmallButton>
        <SmallButton><EraserIcon />Clear<Caret /></SmallButton>
      </SmallStack>
      <Big w={42} icon={<SortIcon />} lines={["Sort &", "Filter"]} />
      <Big w={38} icon={<FindIcon />} lines={["Find &", "Select"]} />
    </Group>
  </Ribbon>
);

const TaskIcons = () => (
  <>
    <TaskButton aria-label="Cortana"><svg width="16" height="16" viewBox="0 0 16 16"><circle cx="8" cy="8" r="6.300" fill="none" stroke="#111" strokeWidth="2" /></svg></TaskButton>
    <TaskButton aria-label="Task view"><svg width="17" height="16" viewBox="0 0 17 16" fill="none" stroke="#222"><path d="M1 4.500h10v7H1zM1 1v1.500h10V1M1 15v-1.500h10V15" strokeWidth="1.200" /><path d="M14.500 1v4M14.500 11v4" strokeWidth="1.500" /><path d="M13 6.500h3v3h-3z" fill="#222" stroke="none" /></svg></TaskButton>
    <TaskButton aria-label="Edge"><svg width="24" height="24" viewBox="0 0 24 24"><defs><linearGradient id="edge" x1="0" x2="1"><stop offset="0" stopColor="#1b9de2" /><stop offset="1" stopColor="#5fd35a" /></linearGradient></defs><path d="M1 11C2 4 7 1 12 1c7 0 11 5 11 9 0 4-3 6-6 6-2 0-4-1-3-3 1-3-2-5-5-5-4 0-7 2-8 3z" fill="url(#edge)" /><path d="M1 11c2-3 6-4 9-3-3 2-4 5-3 8 1 4 6 6 12 3 1 0 1 0 1 1-3 3-7 4-11 3-5-1-9-6-8-12z" fill="#1767b5" /></svg></TaskButton>
    <TaskButton aria-label="Store"><svg width="24" height="22" viewBox="0 0 24 22"><path d="M8 5V1.500h8V5" fill="none" stroke="#2b8fd8" strokeWidth="2" /><path d="M1 4h22v15c0 1-1 2-2 2H3c-1 0-2-1-2-2z" fill="#1d4576" /><path d="M1 4h22v3H1z" fill="#2b8fd8" /><path d="M8 8h3.500v3.500H8z" fill="#e85c33" /><path d="M12.500 8H16v3.500h-3.500z" fill="#7dba3e" /><path d="M8 12.500h3.500V16H8z" fill="#35a4ea" /><path d="M12.500 12.500H16V16h-3.500z" fill="#f5bd31" /></svg></TaskButton>
    <TaskButton aria-label="Mail"><svg width="24" height="22" viewBox="0 0 24 22"><path d="M1 8l11-7 11 7v3H1z" fill="#12529c" /><path d="M3 8h18v8H3z" fill="#e9f3fb" /><path d="M1 8l11 7 11-7v13H1z" fill="#2a97e6" /><path d="M23 8v13H5z" fill="#1c80d2" /></svg></TaskButton>
    <TaskButton aria-label="YouTube"><svg width="23" height="17" viewBox="0 0 23 17"><rect x=".5" y=".5" width="22" height="16" rx="4" fill="#f3120c" /><path d="M9 5l6 3.500L9 12z" fill="#fff" /></svg></TaskButton>
    <TaskButton aria-label="Remote"><svg width="22" height="20" viewBox="0 0 22 20"><path d="M6 1l14 4v10L6 10z" fill="#4aa3df" stroke="#8ba6b8" /><path d="M1 14l6-2 10 4-5 3z" fill="#d5dade" stroke="#a0aab2" strokeWidth=".7" /></svg></TaskButton>
    <TaskButton aria-label="Telegram"><svg width="21" height="21" viewBox="0 0 21 21"><circle cx="10.500" cy="10.500" r="10" fill="#2594d0" /><path d="M4 10.500l12-5-2 11-4-3-2 2-.5-3.500z" fill="#fff" /><path d="M8 12l6-5-4 6z" fill="#b6d6ea" /></svg></TaskButton>
    <TaskButton aria-label="Files" $open><svg width="22" height="19" viewBox="0 0 22 19"><path d="M1 1h8l2 3h10v13H1z" fill="#f5c84b" /><path d="M1 6h20v12H1z" fill="#fbdb76" /><path d="M4 18v-6c0-1 1-2 2-2h10c1 0 2 1 2 2v6h-3v-4H7v4z" fill="#3d95cf" /></svg></TaskButton>
    <TaskButton aria-label="Recorder" $open><svg width="24" height="24" viewBox="0 0 24 24"><circle cx="11.500" cy="11" r="9.500" fill="#f6dcd9" stroke="#cf3733" strokeWidth="2" /><path d="M15 7a5 5 0 1 0-1 8" fill="none" stroke="#cf3733" strokeWidth="2.500" /><circle cx="17" cy="16.500" r="6.500" fill="#f32a20" stroke="#fff" /><circle cx="17" cy="16.500" r="5" fill="none" stroke="#f9b3ad" strokeWidth=".8" /></svg></TaskButton>
    <TaskButton aria-label="Excel" $open $on><svg width="22" height="20" viewBox="0 0 22 20"><path d="M6 2.500h15v15H6z" fill="#f5faf3" stroke="#6a9c5e" /><path d="M14 5h5M14 8h5M14 11h5M14 14h5" stroke="#5f9a52" strokeWidth="2" /><path d="M1 2l12-1v17L1 17z" fill="#e8f3e2" stroke="#4c8a3f" /><path d="M4 5l6 9M10 5l-6 9" stroke="#1d5b24" strokeWidth="2.200" /></svg></TaskButton>
  </>
);

const App = () => (
  <Screen>
    <GlobalStyle />
    <Desktop>
      <OfficeButton aria-label="Office menu"><OfficeLogo /></OfficeButton>
      <TitleBar>
        <QuickBar>
          <QuickPill>
            <IconButton aria-label="Save"><SaveIcon /></IconButton>
            <IconButton $w={28} aria-label="Undo"><UndoIcon /><Caret /></IconButton>
            <IconButton $w={24} aria-label="Redo"><RedoIcon /><Caret c="#a9b0bd" /></IconButton>
          </QuickPill>
          <IconButton $w={20} aria-label="Customise"><svg width="5" height="6" viewBox="0 0 5 6"><path d="M0 0h5v1H0zM0 3h5L2.500 5.500z" fill="#333" /></svg></IconButton>
        </QuickBar>
        <span>abcd - Microsoft Excel</span>
        <WindowButtons>
          <IconButton $w={42} aria-label="Minimise"><svg width="11" height="11"><path d="M1 5.500h9" stroke="#111" /></svg></IconButton>
          <IconButton $w={42} aria-label="Restore"><svg width="11" height="11" fill="none" stroke="#111"><path d="M1.500 3.500h6v6h-6zM3.500 3V1.500h6v6H8" /></svg></IconButton>
          <IconButton $w={42} aria-label="Close"><svg width="11" height="11" stroke="#111"><path d="M1 1l9 9M10 1l-9 9" /></svg></IconButton>
        </WindowButtons>
      </TitleBar>
      <TabBar>
        <Tab $on>Home</Tab>
        {["Insert", "Page Layout", "Formulas", "Data", "Review", "View"].map((t) => <Tab key={t}>{t}</Tab>)}
        <TabTools>
          <IconButton aria-label="Help"><HelpIcon /></IconButton>
          <IconButton aria-label="Minimise workbook"><svg width="9" height="9"><path d="M1 7h6" stroke="#55657e" strokeWidth="2" /></svg></IconButton>
          <IconButton $w={14} aria-label="Restore workbook"><svg width="9" height="9" fill="none" stroke="#55657e"><path d="M.5 3.500h6v3h-6zM2.500 2.500v-1h6v4h-2" /></svg></IconButton>
          <IconButton $w={12} aria-label="Close workbook"><svg width="8" height="8" stroke="#55657e" strokeWidth="1.500"><path d="M1 1l6 6M7 1L1 7" /></svg></IconButton>
        </TabTools>
      </TabBar>
      <RibbonPanel />
      <FormulaBar>
        <NameBox><input aria-label="Name box" defaultValue="I15" /><Caret c="#111" s={7} /></NameBox>
        <FxButton><svg width="9" height="9"><circle cx="4" cy="4" r="3.500" fill="#a9bdd8" /><circle cx="5" cy="5" r="3" fill="#f0f5fc" /></svg>fx</FxButton>
        <FormulaInput aria-label="Formula" />
        <ExpandButton aria-label="Expand"><svg width="8" height="8" fill="none" stroke="#111" strokeWidth="1.500"><path d="M1 1l3 2.500L7 1M1 4.500L4 7l3-2.500" /></svg></ExpandButton>
      </FormulaBar>
      <SheetArea>
        <Sheet />
        <VScroll>
          <SplitHandle />
          <svg width="8" height="5"><path d="M0 5h8L4 0z" fill="#2d4d7e" /></svg>
          <VThumb><svg width="6" height="7" stroke="#8592ab"><path d="M0 .5h6M0 3.500h6M0 6.500h6" /></svg></VThumb>
          <svg width="8" height="12"><path d="M0 0h8L4 5z" fill="#2d4d7e" /></svg>
        </VScroll>
        <Watermark><MarkTitle>Activate Windows</MarkTitle><MarkText>Go to Settings to activate Windows.</MarkText></Watermark>
      </SheetArea>
      <BottomBar>
        <SheetNav>
          {["M0 1h1.500v6H0zM7 1v6L2.500 4z", "M6 1v6L2 4z", "M2 1v6l4-3z", "M6.500 1H8v6H6.500zM1 1v6l4.500-3z"].map((d) => (
            <IconButton key={d} aria-label="Scroll tabs"><svg width="8" height="8"><path d={d} fill="#1d3f80" /></svg></IconButton>
          ))}
        </SheetNav>
        <SheetTab $on>Sheet1</SheetTab>
        <SheetTab>Sheet2</SheetTab>
        <SheetTab>Sheet3</SheetTab>
        <NewTab aria-label="Insert sheet"><svg width="14" height="12" viewBox="0 0 14 12"><path d="M4.500 3.500h8v7h-3l-1-1h-4z" fill="#fff" stroke="#5f7fb5" /><path d="M3 0v6M0 3h6M1 1l4 4M5 1L1 5" stroke="#e69a2c" /></svg></NewTab>
        <HScroll>
          <Grip />
          <svg width="12" height="8"><path d="M10 0v8L6 4z" fill="#2d4d7e" /></svg>
          <HThumb><svg width="7" height="6" stroke="#8592ab"><path d="M.5 0v6M3.500 0v6M6.500 0v6" /></svg></HThumb>
          <svg width="14" height="8"><path d="M1 0v8l5-4z" fill="#2d4d7e" /></svg>
          <Grip />
          <svg width="14" height="8" />
        </HScroll>
      </BottomBar>
      <StatusBar>
        <Ready>Ready</Ready>
        <StatusTools>
          <ViewButtons>
            <ViewButton $on aria-label="Normal"><StatusGlyph d="M.5.5h11v9H.5zM.5 3.500h11M.5 6.500h11M4 .5v9M8 .5v9" /></ViewButton>
            <ViewButton aria-label="Page layout"><StatusGlyph d="M.5.5h11v9H.5zM3.500 2.500h5v5h-5z" /></ViewButton>
            <ViewButton aria-label="Page break"><StatusGlyph d="M.5.5h11v9H.5zM4 .5v5h4v-5" /></ViewButton>
          </ViewButtons>
          <ZoomText>100%</ZoomText>
          <IconButton aria-label="Zoom out"><ZoomKnob /></IconButton>
          <ZoomRange type="range" aria-label="Zoom" min={0} max={100} defaultValue={50} />
          <IconButton aria-label="Zoom in"><ZoomKnob plus /></IconButton>
        </StatusTools>
      </StatusBar>
      <Taskbar>
        <StartButton aria-label="Start"><svg width="15" height="15" viewBox="0 0 15 15"><path d="M0 2l6.500-1v6H0zM7.500 1L15 0v7H7.500zM0 8h6.500v6L0 13zM7.500 8H15v7l-7.500-1z" fill="#0c0c0c" /></svg></StartButton>
        <Search>
          <svg width="16" height="16" viewBox="0 0 16 16" fill="none" stroke="#333" strokeWidth="1.300"><circle cx="9.500" cy="6" r="5" /><path d="M6 9.500L.5 15" /></svg>
          <input aria-label="Search" placeholder="Type here to search" />
        </Search>
        <TaskIcons />
        <Tray>
          <Weather><svg width="19" height="19"><defs><linearGradient id="sun" x1="0" y1="0" x2="1" y2="1"><stop offset="0" stopColor="#fbb32c" /><stop offset="1" stopColor="#f47a1c" /></linearGradient></defs><circle cx="9.500" cy="9.500" r="9" fill="url(#sun)" /></svg>22°C</Weather>
          <TrayIcons>
            <svg width="14" height="14" fill="none" stroke="#222" strokeWidth="1.300"><path d="M2 9.500l5-5 5 5" /></svg>
            <svg width="14" height="16" fill="none" stroke="#222" strokeWidth="1.300"><rect x="3" y="4.500" width="6" height="7" rx="1" /><path d="M9 7l3-1.500v5L9 9M3 2c2-1.500 5-1.500 7 0M3 14c2 1.500 5 1.500 7 0" /></svg>
            <svg width="14" height="10" fill="none" stroke="#222"><path d="M.5 1.500h11v7H.5zM12 4h1.500v2H12" /><path d="M2 3h6v4H2z" fill="#222" /></svg>
            <svg width="16" height="16" fill="none" stroke="#222"><circle cx="7.500" cy="7.500" r="6.500" /><path d="M7.500 1c-4 4-4 9 0 13M7.500 1c3 3 3 5 3 7M1 5h13M1 10h7" /><circle cx="12" cy="12" r="3" fill="#dde8ee" /><path d="M10 14l4-4" /></svg>
            <svg width="16" height="14" fill="none" stroke="#222"><path d="M.5 5h3l3-3v10l-3-3h-3zM8.500 5c1 1 1 3 0 4M10.500 3c2 2 2 6 0 8M12.500 1c3 3 3 9 0 12" /></svg>
          </TrayIcons>
          <span>ENG</span>
          <Clock>19:40<br />17-12-2022</Clock>
          <IconButton aria-label="Notifications"><svg width="24" height="24" viewBox="0 0 24 24"><path d="M1 1h15v12H8l-3 3v-3H1z" fill="#111" /><path d="M3.500 4.500h10M3.500 7h10M3.500 9.500h6" stroke="#dfe8ef" /><circle cx="15" cy="15" r="7" fill="#d7d7d7" stroke="#8b8b8b" /><text x="15" y="19" fontSize="11" textAnchor="middle" fontFamily="Open Sans" fill="#111">1</text></svg></IconButton>
        </Tray>
      </Taskbar>
    </Desktop>
  </Screen>
);

export default App;
